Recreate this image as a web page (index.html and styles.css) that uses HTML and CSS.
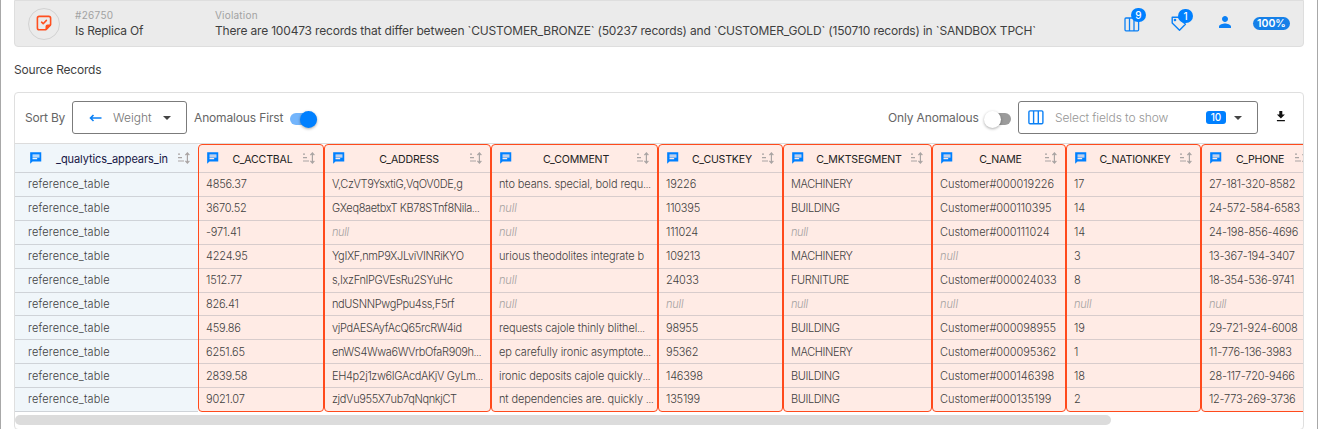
FILE: index.html
```html
<!DOCTYPE html>
<html lang="en">
<head>
<meta charset="utf-8">
<title>Source Records</title>
<link rel="stylesheet" href="styles.css">
</head>
<body>
<main class="page">
  <header class="summary">
    <div class="rule-icon"><svg width="16" height="16" viewBox="0 0 16 16" fill="none" stroke="#ff4f1f" stroke-width="1.6" stroke-linecap="round" stroke-linejoin="round"><path d="M9.8 14.7H3.2a1.8 1.8 0 0 1-1.8-1.8V3.2a1.8 1.8 0 0 1 1.8-1.8h9.6a1.8 1.8 0 0 1 1.8 1.8v6.6z"/><path d="M14.2 10.3h-2.6a1.3 1.3 0 0 0-1.3 1.3v2.6z" fill="#ff4f1f"/><path d="m5.6 7.2 1.6 1.5 3.2-3.3"/></svg></div>
    <div class="fact fact-id"><span class="label">#26750</span><span class="value">Is Replica Of</span></div>
    <div class="fact"><span class="label violation">Violation</span><span class="value message">There are 100473 records that differ between `CUSTOMER_BRONZE` (50237 records) and `CUSTOMER_GOLD` (150710 records) in `SANDBOX TPCH`</span></div>
    <div class="meta">
      <div class="stat"><svg width="16" height="15" viewBox="0 0 16 15" fill="none" stroke="#0b80f5" stroke-width="1.3"><rect x="1" y="1" width="13.6" height="12.8" rx="1"/><path d="M5.5 1v13M10 1v13"/></svg><b class="count">9</b></div>
      <div class="stat tag"><svg width="16" height="16" viewBox="0 0 16 16" fill="none" stroke="#0b80f5" stroke-width="1.4" stroke-linejoin="round"><path d="M1.2 1.2h6.2l7 7.1-5.9 6-7.3-7.2z"/><circle cx="4" cy="4" r=".6" fill="#0b80f5"/></svg><b class="count">1</b></div>
      <svg class="person" width="18" height="18" viewBox="0 0 24 24" fill="#0b80f5"><path d="M12 12c2.21 0 4-1.79 4-4s-1.79-4-4-4-4 1.79-4 4 1.79 4 4 4zm0 2c-2.67 0-8 1.34-8 4v2h16v-2c0-2.66-5.33-4-8-4z"/></svg>
      <b class="percent">100%</b>
    </div>
  </header>
  <h2 class="title">Source Records</h2>
  <section class="card">
    <div class="toolbar">
      <span class="caption sort-label">Sort By</span>
      <div class="select sort"><svg width="13" height="8" viewBox="0 0 13 8" fill="none" stroke="#0b80f5" stroke-width="1.6"><path d="M12.5 4H1.5M4.5 1 1.5 4l3 3"/></svg><span class="sort-value">Weight</span><i class="caret"></i></div>
      <span class="caption first-label">Anomalous First</span>
      <span class="switch on"><i class="knob"></i></span>
      <span class="caption only-label">Only Anomalous</span>
      <span class="switch off"><i class="knob"></i></span>
      <div class="select fields"><svg width="16" height="15" viewBox="0 0 16 15" fill="none" stroke="#0b80f5" stroke-width="1.4"><rect x=".9" y=".9" width="14" height="12.8" rx="1.2"/><path d="M5.6 1v13M10.3 1v13"/></svg><span class="placeholder">Select fields to show</span><b class="chip">10</b><i class="caret"></i></div>
      <svg class="download" width="10" height="11" viewBox="0 0 10 11" fill="#111"><path d="M3.3 0h3v3.4h2.6L4.9 7.5.9 3.4h2.4zM.9 8.9h8v1.4h-8z"/></svg>
    </div>
    <div class="table" id="table"></div>
    <div class="scrollbar"></div>
  </section>
</main>
<script src="table.js"></script>
</body>
</html>
```
FILE: styles.css
```css
* { box-sizing: border-box; }
body { margin: 0; background: #fff; color: #3f3f3f; font-family: Inter, "Liberation Sans", sans-serif; }
.page { height: 429px; padding: 0 13px; border-left: 1px solid #a8a8a8; border-right: 1px solid #a8a8a8; overflow: hidden; }
.summary { display: flex; width: 1290px; height: 47px; padding-left: 13px; background: #ebebeb; border: 1px solid #dedede; border-radius: 0 0 4px 4px; }
.rule-icon { display: flex; justify-content: center; width: 32px; height: 32px; margin-top: 7px; padding-top: 6px; border: 1px solid #d2d2d2; border-radius: 50%; }
.fact { display: flex; flex-direction: column; white-space: nowrap; padding-top: 8px; }
.fact-id { width: 140px; margin-left: 15px; }
.label { font-size: 10px; line-height: 13px; color: #a2a2a2; letter-spacing: .3px; }
.violation { letter-spacing: .2px; }
.value { font-size: 12px; line-height: 17px; letter-spacing: -.25px; }
.message { letter-spacing: -.18px; }
.meta { display: flex; margin-left: auto; padding-right: 13px; }
.stat { position: relative; margin: 15px -1px 0 1px; width: 47px; }
.count { position: absolute; left: 7px; top: -8px; width: 15px; height: 14px; border-radius: 7px; background: #0080ff; color: #fff; font-size: 10px; font-weight: 500; line-height: 14px; text-align: center; }
.tag .count { left: 7px; top: -7px; }
.person { margin: 12px 19px 0 -1px; }
.percent { width: 37px; height: 13px; margin-top: 16px; border-radius: 7px; background: #1680e8; color: #fff; font-size: 10.5px; line-height: 14px; font-weight: 600; text-align: center; }
.title { margin: 14px 0 14px; height: 17px; font-size: 12px; line-height: 17px; font-weight: 400; letter-spacing: -.2px; }
.card { width: 1290px; height: 338px; border: 1px solid #dfdfdf; border-radius: 4px; overflow: hidden; }
.toolbar { display: flex; height: 50px; padding-top: 8px; }
.caption { font-size: 12px; line-height: 34px; color: #666; white-space: nowrap; }
.sort-label { width: 47px; margin-left: 10px; letter-spacing: -.2px; }
.select { display: flex; align-items: center; height: 33px; border: 1px solid #7b7b7b; border-radius: 3px; font-size: 12px; }
.sort { width: 115px; padding-left: 16px; }
.sort-value { width: 50px; margin-left: 11px; color: #757575; font-weight: 300; }
.caret { border: 4px solid transparent; border-top: 4px solid #444; border-bottom: 0; }
.first-label { width: 96px; margin-left: 7px; letter-spacing: -.15px; }
.switch { position: relative; width: 27px; height: 12px; margin-top: 12px; border-radius: 6px; }
.knob { position: absolute; top: -2px; width: 17px; height: 17px; border-radius: 50%; box-shadow: 0 1px 3px #0005; }
.on { background: #73b5fc; }
.on .knob { right: 0; background: #0080ff; }
.only-label { width: 97px; margin-left: auto; letter-spacing: -.15px; }
.off { background: #9b9b9b; width: 26px; }
.off .knob { left: -1px; background: #fff; }
.fields { width: 240px; margin-left: 7px; padding-left: 9px; }
.placeholder { width: 151px; margin-left: 11px; color: #969696; font-weight: 300; letter-spacing: -.1px; }
.chip { width: 20px; height: 13px; margin-right: 8px; border-radius: 3px; background: #0080ff; color: #fff; font-size: 10px; font-weight: 500; line-height: 13px; text-align: center; }
.download { margin: 10px 17px 0 18px; }
.table { display: flex; height: 269px; border-top: 1px solid #dcdcdc; overflow: hidden; }
.column { flex: none; height: 268px; border: 1px solid #ff4a1c; border-radius: 4px; background: #ffebe5; overflow: hidden; }
.column.reference { border: 0; border-radius: 0; padding-top: 1px; background: #f0f6fa; }
.head { display: flex; align-items: flex-start; height: 28px; padding: 6px 8px 0 7px; border-bottom: 1px solid #d8cccc; color: #222; }
.head-name { flex: 1; padding: 1px 0 0 3px; text-align: center; font-size: 10.6px; line-height: 16px; white-space: nowrap; }
.sort-icon { margin-top: 1px; }
.cell { height: 24px; padding-left: 7px; border-bottom: 1px solid #d8cccc; font-size: 11px; line-height: 23px; font-weight: 350; white-space: nowrap; }
.cell.short { height: 23px; }
.cell.short ~ .cell { line-height: 25px; }
.column .cell.last { height: 23px; border: 0; line-height: 23px; }
.reference .head { padding: 6px 8px 0 14px; border-color: #cfd3d8; }
.reference .head-name { padding: 0 0 0 4px; color: #151544; font-size: 11px; }
.reference .cell { padding-left: 13px; border-color: #cfd3d8; }
.column.reference .last { height: 24px; border-bottom: 1px solid #cfd3d8; }
.null { color: #a3a09f; font-style: italic; font-weight: 300; }
.dots { font-size: 9px; }
.scrollbar { width: 1096px; height: 10px; margin-top: 3px; border-radius: 5px; background: #dcdcdc; }
```
FILE: table.js
```js
const columns = [
  { name: '_qualytics_appears_in', width: 183, spacing: 0.18, headSpacing: -0.08, reference: true, rows: Array(10).fill('reference_table') },
  { name: 'C_ACCTBAL', width: 126, spacing: -0.2, rows: ['4856.37', '3670.52', '-971.41', '4224.95', '1512.77', '826.41', '459.86', '6251.65', '2839.58', '9021.07'] },
  { name: 'C_ADDRESS', width: 167, spacing: -0.36, rows: ['V,CzVT9YsxtiG,VqOV0DE,g', 'GXeq8aetbxT KB78STnf8Nila…', null, 'YgIXF,nmP9XJLviVINRiKYO', 's,IxzFnIPGVEsRu2SYuHc', 'ndUSNNPwgPpu4ss,F5rf', 'vjPdAESAyfAcQ65rcRW4id', 'enWS4Wwa6WVrbOfaR909h…', 'EH4p2j1zw6IGAcdAKjV GyLm…', 'zjdVu955X7ub7qNqnkjCT'] },
  { name: 'C_COMMENT', width: 167, spacing: -0.12, rows: ['nto beans. special, bold requ…', null, null, 'urious theodolites integrate b', null, null, 'requests cajole thinly blithel…', 'ep carefully ironic asymptote…', 'ironic deposits cajole quickly…', 'nt dependencies are. quickly …'] },
  { name: 'C_CUSTKEY', width: 125, spacing: -0.2, rows: ['19226', '110395', '111024', '109213', '24033', null, '98955', '95362', '146398', '135199'] },
  { name: 'C_MKTSEGMENT', width: 149, spacing: -0.38, rows: ['MACHINERY', 'BUILDING', null, 'MACHINERY', 'FURNITURE', null, 'BUILDING', 'MACHINERY', 'BUILDING', 'BUILDING'] },
  { name: 'C_NAME', width: 134, spacing: -0.05, rows: ['Customer#000019226', 'Customer#000110395', 'Customer#000111024', null, 'Customer#000024033', null, 'Customer#000098955', 'Customer#000095362', 'Customer#000146398', 'Customer#000135199'] },
  { name: 'C_NATIONKEY', width: 135, spacing: -0.2, rows: ['17', '14', '14', '3', '8', null, '19', '1', '18', '2'] },
  { name: 'C_PHONE', width: 115, spacing: -0.25, rows: ['27-181-320-8582', '24-572-584-6583', '24-198-856-4696', '13-367-194-3407', '18-354-536-9741', null, '29-721-924-6008', '11-776-136-3983', '28-117-720-9466', '12-773-269-3736'] }
];
const chat = '<svg width="14" height="14" viewBox="0 0 24 24" fill="#0080ff"><path d="M21 2H2v20l4-4h15V2zM6 9h12v2H6V9zm8 5H6v-2h8v2zm4-6H6V6h12v2z"/></svg>';
const sort = '<svg class="sort-icon" width="13" height="12" viewBox="0 0 13 12" fill="none" stroke="#a9a4a3" stroke-width="1.2"><path d="M1 2.2h2M1 5.6h4M1 9h6M10.4 2v8M8.4 3.2l2-2.2 2 2.2M8.4 8.8l2 2.2 2-2.2"/></svg>';
document.getElementById('table').innerHTML = columns.map(col => {
  const cells = col.rows.map((text, i) => {
    const size = i === 5 ? ' short' : i === 9 ? ' last' : '';
    return text === null ? `<div class="cell null${size}">null</div>` : `<div class="cell${size}">${text.replace('…', '<span class="dots">…</span>')}</div>`;
  }).join('');
  const headSpacing = col.headSpacing ?? -0.2;
  return `<div class="column${col.reference ? ' reference' : ''}" style="width:${col.width}px;letter-spacing:${col.spacing}px"><div class="head" style="letter-spacing:${headSpacing}px">${chat}<span class="head-name">${col.name}</span>${sort}</div>${cells}</div>`;
}).join('');
```
